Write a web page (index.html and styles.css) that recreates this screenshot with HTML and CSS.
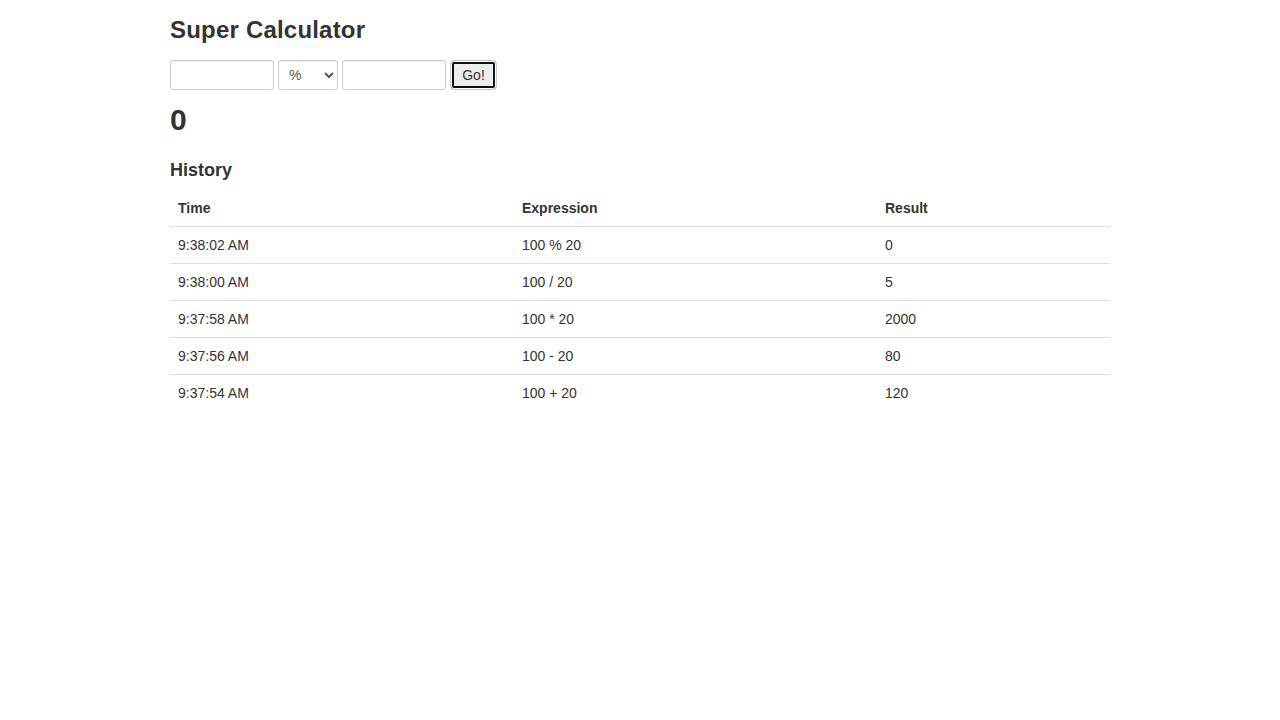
FILE: index.html
```html
<!DOCTYPE html>
<html lang="en">
<head>
<meta charset="utf-8">
<title>Super Calculator</title>
<link rel="stylesheet" href="styles.css">
</head>
<body>
<div class="container">
  <h1 class="title">Super Calculator</h1>
  <form class="calc-form">
    <input class="field field-input" type="text">
    <select class="field field-select">
      <option>+</option>
      <option>-</option>
      <option>*</option>
      <option>/</option>
      <option selected>%</option>
    </select>
    <input class="field field-input" type="text">
    <button class="go-btn" type="button">Go!</button>
  </form>
  <h2 class="result">0</h2>
  <h4 class="history-title">History</h4>
  <table class="history">
    <thead>
      <tr><th class="col-time">Time</th><th class="col-expr">Expression</th><th>Result</th></tr>
    </thead>
    <tbody>
      <tr><td>9:38:02 AM</td><td>100 % 20</td><td>0</td></tr>
      <tr><td>9:38:00 AM</td><td>100 / 20</td><td>5</td></tr>
      <tr><td>9:37:58 AM</td><td>100 * 20</td><td>2000</td></tr>
      <tr><td>9:37:56 AM</td><td>100 - 20</td><td>80</td></tr>
      <tr><td>9:37:54 AM</td><td>100 + 20</td><td>120</td></tr>
    </tbody>
  </table>
</div>
</body>
</html>
```

FILE: styles.css
```css
html, body {
  margin: 0;
  padding: 0;
  background: #fff;
}
body {
  font-family: "Liberation Sans", Arial, Helvetica, sans-serif;
  font-size: 14px;
  line-height: 20px;
  color: #333;
}
.container {
  width: 940px;
  margin: 0 auto;
}
.title {
  font-size: 24px;
  line-height: 26px;
  font-weight: bold;
  letter-spacing: 0.2px;
  margin: 17px 0 17px;
}
.calc-form {
  display: flex;
  align-items: center;
  gap: 4px;
  height: 30px;
  margin: 0;
}
.field {
  box-sizing: border-box;
  height: 30px;
  border: 1px solid #ccc;
  border-radius: 3px;
  background: #fff;
  font-family: inherit;
  font-size: 14px;
  color: #555;
  padding: 5px 10px;
  margin: 0;
  box-shadow: inset 0 1px 1px rgba(0,0,0,.075);
}
.field-input {
  width: 104px;
}
.field-select {
  width: 60px;
  padding: 4px 4px 4px 6px;
}
.go-btn {
  box-sizing: border-box;
  width: 47px;
  height: 30px;
  margin: 0;
  border: 1px solid #c8c8c8;
  border-radius: 4px;
  background: #ececec;
  box-shadow: inset 0 0 0 1px #fff, inset 0 0 0 3px #111;
  font-family: inherit;
  font-size: 14px;
  color: #333;
  padding: 0;
}
.result {
  font-size: 30px;
  line-height: 33px;
  font-weight: bold;
  margin: 13px 0 0;
}
.history-title {
  font-size: 18px;
  line-height: 20px;
  font-weight: bold;
  margin: 24px 0 10px;
}
.history {
  width: 100%;
  border-collapse: collapse;
  border-spacing: 0;
}
.history th,
.history td {
  padding: 8px;
  line-height: 20px;
  text-align: left;
  vertical-align: top;
}
.history th {
  font-weight: bold;
  border-bottom: 1px solid #ddd;
}
.history td {
  border-top: 1px solid #ddd;
}
.col-time {
  width: 328px;
}
.col-expr {
  width: 347px;
}
```
